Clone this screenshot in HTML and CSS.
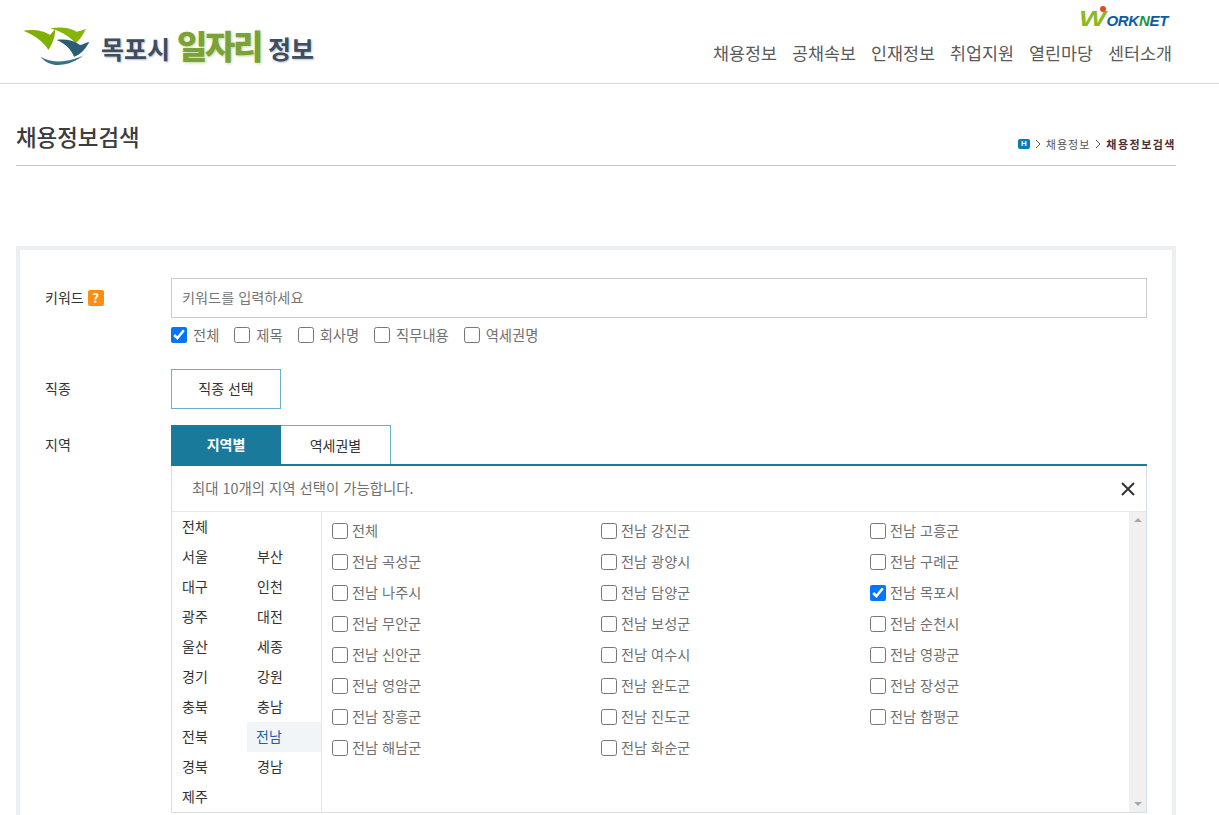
FILE: index.html
```html
<!DOCTYPE html>
<html lang="ko">
<head>
  <meta charset="UTF-8">
  <title>목포시 일자리 정보</title>
  <link rel="stylesheet" href="styles.css">
</head>
<body>

  <header class="header">
    <a class="logo" href="#">
      <svg class="logo-mark" width="70" height="42" viewBox="0 0 210 126">
        <path fill="#7fb000" d="M1 14C25 10 60 12 81 27C88 20 92 14 96 10C98 30 88 55 76 72C65 50 40 30 1 14Z"/>
        <path fill="#86b40a" d="M81 7C105 4 135 0 161 17C170 15 180 12 189 9C180 25 170 45 156 52C145 35 115 15 81 7Z"/>
        <path fill="#2c5d74" d="M101 42C125 38 150 42 171 57C180 55 190 50 199 47C190 65 175 85 153 92C145 70 125 52 101 42Z"/>
        <path fill="#3a7285" d="M53 92C75 105 110 112 150 100C165 96 175 92 181 87C165 105 130 117 105 117C85 117 65 108 53 92Z"/>
      </svg>
      <span class="logo-text">목포시 <b>일자리</b> 정보</span>
    </a>
    <div class="header-right">
      <div class="worknet"><span class="wn-w">W</span><i class="wn-dot"></i>ORK<span class="wn-n">N</span>ET</div>
      <nav class="gnb">
        <a href="#">채용정보</a>
        <a href="#">공채속보</a>
        <a href="#">인재정보</a>
        <a href="#">취업지원</a>
        <a href="#">열린마당</a>
        <a href="#">센터소개</a>
      </nav>
    </div>
  </header>

  <div class="content">
    <div class="page-title">
      <h2>채용정보검색</h2>
      <div class="breadcrumb">
        <span class="home-icon">H</span>
        <svg class="crumb-arrow" width="6" height="10" viewBox="0 0 6 10"><path d="M1 1l4 4-4 4" fill="none" stroke="#555"/></svg>
        <span>채용정보</span>
        <svg class="crumb-arrow" width="6" height="10" viewBox="0 0 6 10"><path d="M1 1l4 4-4 4" fill="none" stroke="#555"/></svg>
        <strong>채용정보검색</strong>
      </div>
    </div>

    <form class="search-panel" onsubmit="event.preventDefault();">
      <div class="row row-keyword">
        <div class="label">키워드 <span class="help">?</span></div>
        <div class="field">
          <input class="text-input" type="text" placeholder="키워드를 입력하세요">
          <div class="check-line">
            <label class="check"><input type="checkbox" checked>전체</label>
            <label class="check"><input type="checkbox">제목</label>
            <label class="check"><input type="checkbox">회사명</label>
            <label class="check"><input type="checkbox">직무내용</label>
            <label class="check"><input type="checkbox">역세권명</label>
          </div>
        </div>
      </div>

      <div class="row row-job">
        <div class="label">직종</div>
        <div class="field"><button class="select-btn" type="button">직종 선택</button></div>
      </div>

      <div class="row">
        <div class="label">지역</div>
        <div class="field">
          <div class="tabs">
            <a class="tab active" href="#">지역별</a>
            <a class="tab" href="#">역세권별</a>
          </div>
          <div class="area-box">
            <div class="area-notice">
              <span>최대 10개의 지역 선택이 가능합니다.</span>
              <svg class="close-icon" width="16" height="16" viewBox="0 0 16 16"><path d="M2 2l12 12M14 2L2 14" stroke="#333" stroke-width="2"/></svg>
            </div>
            <div class="area-body">
              <ul class="sido">
                <li class="wide">전체</li>
                <li>서울</li><li>부산</li>
                <li>대구</li><li>인천</li>
                <li>광주</li><li>대전</li>
                <li>울산</li><li>세종</li>
                <li>경기</li><li>강원</li>
                <li>충북</li><li>충남</li>
                <li>전북</li><li class="on">전남</li>
                <li>경북</li><li>경남</li>
                <li>제주</li>
              </ul>
              <div class="gugun">
                <label class="check"><input type="checkbox">전체</label>
                <label class="check"><input type="checkbox">전남 강진군</label>
                <label class="check"><input type="checkbox">전남 고흥군</label>
                <label class="check"><input type="checkbox">전남 곡성군</label>
                <label class="check"><input type="checkbox">전남 광양시</label>
                <label class="check"><input type="checkbox">전남 구례군</label>
                <label class="check"><input type="checkbox">전남 나주시</label>
                <label class="check"><input type="checkbox">전남 담양군</label>
                <label class="check"><input type="checkbox" checked>전남 목포시</label>
                <label class="check"><input type="checkbox">전남 무안군</label>
                <label class="check"><input type="checkbox">전남 보성군</label>
                <label class="check"><input type="checkbox">전남 순천시</label>
                <label class="check"><input type="checkbox">전남 신안군</label>
                <label class="check"><input type="checkbox">전남 여수시</label>
                <label class="check"><input type="checkbox">전남 영광군</label>
                <label class="check"><input type="checkbox">전남 영암군</label>
                <label class="check"><input type="checkbox">전남 완도군</label>
                <label class="check"><input type="checkbox">전남 장성군</label>
                <label class="check"><input type="checkbox">전남 장흥군</label>
                <label class="check"><input type="checkbox">전남 진도군</label>
                <label class="check"><input type="checkbox">전남 함평군</label>
                <label class="check"><input type="checkbox">전남 해남군</label>
                <label class="check"><input type="checkbox">전남 화순군</label>
              </div>
              <div class="scrollbar">
                <span class="arrow-up"></span>
                <span class="arrow-down"></span>
              </div>
            </div>
          </div>
        </div>
      </div>
    </form>
  </div>

</body>
</html>
```

FILE: styles.css
```css
html, body {
  height: 815px;
  overflow: hidden;
}

body {
  margin: 0;
  background: #fff;
  color: #333;
  font-family: "Noto Sans CJK KR", "Noto Sans", sans-serif;
  font-size: 14px;
}

a {
  color: inherit;
  text-decoration: none;
}

ul {
  list-style: none;
  margin: 0;
  padding: 0;
}

/* header */
.header {
  display: flex;
  justify-content: space-between;
  height: 83px;
  padding: 0 47px 0 23px;
  border-bottom: 1px solid #d8d8d8;
}

.logo {
  display: flex;
  align-items: flex-start;
  padding-top: 26px;
}

.logo-mark {
  flex: none;
}

.logo-text {
  margin: -1px 0 0 8px;
  color: #3e4d60;
  font-size: 25px;
  font-weight: 700;
  line-height: 40px;
  white-space: nowrap;
  text-shadow: 1px 1px 2px #b3bac4;
}

.logo-text b {
  color: #7ba237;
  font-size: 33px;
  letter-spacing: -2.4px;
  text-shadow: 1px 1px 3px #c3d6a2;
}

.header-right {
  display: flex;
  flex-direction: column;
  align-items: flex-end;
}

.worknet {
  position: relative;
  height: 26px;
  margin: 6px 4px 0 0;
  color: #0d5ba8;
  font-family: "Liberation Sans", sans-serif;
  font-size: 15px;
  font-style: italic;
  font-weight: 700;
  line-height: 26px;
  letter-spacing: -0.3px;
}

.wn-w {
  display: inline-block;
  width: 27px;
  color: #8dbb1e;
  font-size: 22px;
  transform: scaleX(1.3);
  transform-origin: left;
}

.wn-n {
  color: #149a3c;
}

.wn-dot {
  position: absolute;
  top: 0;
  left: 21px;
  width: 6px;
  height: 6px;
  border-radius: 50%;
  background: #e8481c;
}

.gnb {
  display: flex;
  gap: 15px;
  margin-top: 8px;
  color: #5a5a5a;
  font-size: 17.4px;
  line-height: 26px;
}

/* page title */
.content {
  padding: 0 43px 0 16px;
}

.page-title {
  display: flex;
  justify-content: space-between;
  align-items: flex-end;
  height: 81px;
  border-bottom: 1px solid #c8c8c8;
  margin-bottom: 80px;
}

.page-title h2 {
  margin: 0 0 13px;
  color: #3c3c3c;
  font-size: 22.4px;
  font-weight: 500;
  line-height: 32px;
}

.breadcrumb {
  display: flex;
  align-items: center;
  gap: 5px;
  margin: 0 0 13px 0;
  color: #555;
  font-size: 11px;
  line-height: 16px;
  letter-spacing: 1px;
}

.breadcrumb strong {
  color: #4b2e2e;
  letter-spacing: 1.5px;
}

.home-icon {
  display: block;
  width: 12px;
  height: 10px;
  border-radius: 2px;
  background: #0a7abf;
  color: #fff;
  font-family: "Liberation Sans", sans-serif;
  font-size: 8px;
  font-weight: 700;
  line-height: 10px;
  text-align: center;
  letter-spacing: 0;
}

/* search form */
.search-panel {
  border: 4px solid #eceff2;
  border-bottom: 0;
  padding: 28px 25px 2px 25px;
}

.row {
  display: flex;
}

.row-keyword {
  margin-bottom: 24px;
}

.row-job {
  margin-bottom: 16px;
}

.label {
  flex: none;
  width: 126px;
  padding-top: 9px;
  color: #333;
  line-height: 20px;
}

.help {
  display: inline-block;
  width: 16px;
  height: 16px;
  border-radius: 2px;
  background: #ff8c14;
  color: #fff;
  font-size: 13px;
  font-weight: 700;
  line-height: 16px;
  text-align: center;
}

.field {
  flex: 1;
  min-width: 0;
}

.text-input {
  display: block;
  box-sizing: border-box;
  width: 100%;
  height: 40px;
  padding: 0 10px 2px;
  border: 1px solid #ccc;
  color: #333;
  font: inherit;
  font-size: 14.2px;
}

.text-input::placeholder {
  color: #777;
}

.check-line {
  display: flex;
  gap: 15px;
  margin-top: 7px;
  height: 20px;
  font-size: 14.3px;
}

.check {
  display: flex;
  align-items: center;
  gap: 6px;
  color: #707070;
  line-height: 20px;
  white-space: nowrap;
}

.check input {
  flex: none;
  width: 16px;
  height: 16px;
  margin: 0;
}

.select-btn {
  display: block;
  width: 110px;
  height: 40px;
  padding: 0 0 2px;
  border: 1px solid #6ab0cc;
  background: #fff;
  color: #333;
  font: inherit;
}

/* area tabs */
.tabs {
  display: flex;
  height: 39px;
  border-bottom: 2px solid #1a7a9c;
}

.tab {
  box-sizing: border-box;
  width: 110px;
  height: 39px;
  border: 1px solid #6ab0cc;
  border-bottom: 0;
  border-left: 0;
  text-align: center;
  line-height: 38px;
}

.tab.active {
  border: 0;
  background: #1a7a9c;
  color: #fff;
  font-weight: 700;
}

.area-box {
  border: 1px solid #d3e0e9;
  border-top: 0;
}

.area-notice {
  display: flex;
  justify-content: space-between;
  align-items: center;
  height: 45px;
  padding: 0 10px 0 20px;
  border-bottom: 1px solid #e6e6e6;
  color: #707070;
  font-size: 14.4px;
}

.area-notice span {
  margin-bottom: 2px;
}

.area-body {
  display: flex;
  height: 300px;
}

.sido {
  flex: none;
  display: grid;
  grid-template-columns: 75px 74px;
  grid-auto-rows: 30px;
  width: 149px;
  border-right: 1px solid #e6e6e6;
}

.sido li {
  padding-left: 10px;
  line-height: 28px;
}

.sido .wide {
  grid-column: 1 / 3;
}

.sido .on {
  padding-left: 9px;
  background: #f1f5f8;
  color: #1f5fa8;
}

.gugun {
  flex: 1;
  min-width: 0;
  display: grid;
  grid-template-columns: 269px 269px 1fr;
  grid-auto-rows: 31px;
  padding: 2px 0 0 10px;
  font-size: 14.2px;
}

.gugun .check {
  gap: 4px;
}

.gugun .check input {
  margin-top: 2px;
}

.scrollbar {
  flex: none;
  display: flex;
  flex-direction: column;
  justify-content: space-between;
  align-items: center;
  width: 17px;
  padding: 6px 0;
  box-sizing: border-box;
  background: #f0f0f0;
}

.arrow-up {
  border: 4px solid transparent;
  border-top: 0;
  border-bottom: 4px solid #a8a8a8;
}

.arrow-down {
  border: 4px solid transparent;
  border-bottom: 0;
  border-top: 4px solid #a8a8a8;
}
```
